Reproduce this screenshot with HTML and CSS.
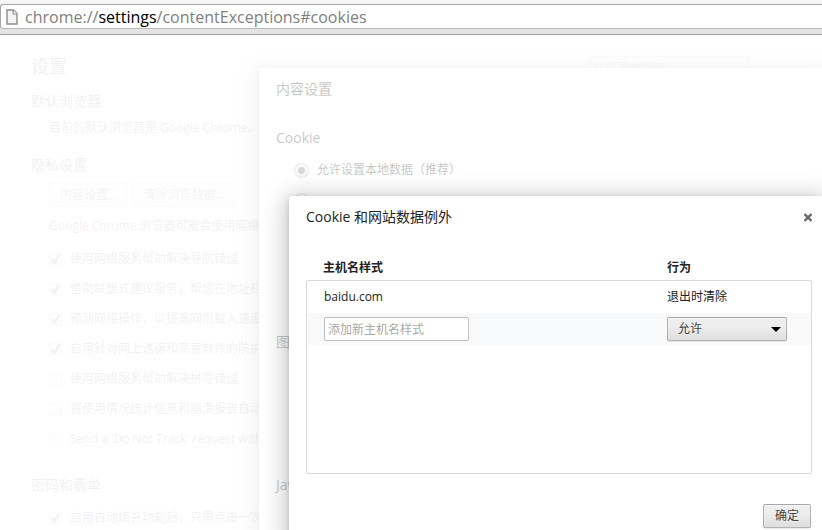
FILE: index.html
```html
<!DOCTYPE html>
<html lang="zh-CN">

<head>
    <meta charset="UTF-8">
    <meta name="viewport" content="width=device-width, initial-scale=1.0">
    <title>设置 - Cookie 和网站数据例外</title>
    <link rel="stylesheet" href="styles.css">
</head>

<body>
    <header class="toolbar">
        <div class="address">
            <svg class="page-icon" width="12" height="16" viewBox="0 0 12 16">
                <path d="M1 1h6.500L11 4.500V15H1z" fill="#f4f4f4" stroke="#8c8c8c" stroke-width="1.400"/>
                <path d="M7.200 1v4H11" fill="#fff" stroke="#8c8c8c" stroke-width="1.200"/>
            </svg>
            <span class="url">chrome://<b>settings</b>/contentExceptions#cookies</span>
        </div>
    </header>

    <main class="stage">
        <div class="settings">
            <div class="settings-head">
                <h1>设置</h1>
                <input class="search" type="search" placeholder="在设置中搜索" aria-label="在设置中搜索">
            </div>

            <section>
                <h2>默认浏览器</h2>
                <div class="section-body">
                    <p>目前的默认浏览器是 Google Chrome。</p>
                </div>
            </section>

            <section class="privacy">
                <h2>隐私设置</h2>
                <div class="section-body">
                    <div class="buttons">
                        <button type="button">内容设置...</button>
                        <button type="button">清除浏览数据...</button>
                    </div>
                    <p class="note">Google Chrome 浏览器可能会使用网络服务</p>
                    <label class="option"><input type="checkbox" checked>使用网络服务帮助解决导航错误</label>
                    <label class="option"><input type="checkbox" checked>借助联想式建议服务，帮您在地址栏</label>
                    <label class="option"><input type="checkbox" checked>预测网络操作，以提高网页载入速度</label>
                    <label class="option"><input type="checkbox" checked>启用针对网上诱骗和恶意软件的防护</label>
                    <label class="option"><input type="checkbox">使用网络服务帮助解决拼写错误</label>
                    <label class="option"><input type="checkbox">将使用情况统计信息和崩溃报告自动</label>
                    <label class="option"><input type="checkbox">Send a 'Do Not Track' request with your</label>
                </div>
            </section>

            <section>
                <h2>密码和表单</h2>
                <div class="section-body">
                    <label class="option"><input type="checkbox" checked>启用自动填充功能后，只需点击一次</label>
                </div>
            </section>
        </div>

        <!-- 内容设置 -->
        <div class="overlay">
            <div class="dialog dialog-content">
                <h1>内容设置</h1>
                <section class="group group-cookie">
                    <h3>Cookie</h3>
                    <label class="option"><input type="radio" name="cookie" checked>允许设置本地数据（推荐）</label>
                    <label class="option"><input type="radio" name="cookie" aria-label="Cookie"></label>
                </section>
                <section class="group group-images">
                    <h3>图片</h3>
                </section>
                <section class="group">
                    <h3>JavaScript</h3>
                </section>
            </div>
        </div>

        <!-- Cookie 例外 -->
        <div class="overlay">
            <div class="dialog dialog-exceptions">
                <div class="dialog-head">
                    <h1>Cookie 和网站数据例外</h1>
                    <button class="close" type="button" aria-label="关闭">
                        <svg width="8" height="10" viewBox="1 0 8 10">
                            <path d="M1.500 2l7 7M8.500 2l-7 7" stroke="#6a6a6a" stroke-width="2.400"/>
                        </svg>
                    </button>
                </div>
                <table class="exceptions">
                    <thead>
                        <tr>
                            <th>主机名样式</th>
                            <th>行为</th>
                        </tr>
                    </thead>
                    <tbody>
                        <tr>
                            <td>baidu.com</td>
                            <td>退出时清除</td>
                        </tr>
                        <tr class="new-row">
                            <td><input class="host" type="text" placeholder="添加新主机名样式" aria-label="主机名样式"></td>
                            <td>
                                <div class="select">
                                    <select aria-label="行为">
                                        <option>允许</option>
                                    </select>
                                </div>
                            </td>
                        </tr>
                    </tbody>
                </table>
                <div class="dialog-foot">
                    <button type="button">确定</button>
                </div>
            </div>
        </div>
    </main>
</body>

</html>
```
FILE: styles.css
```css
* {
    box-sizing: border-box;
}

body {
    margin: 0;
    height: 100vh;
    display: flex;
    flex-direction: column;
    overflow: hidden;
    background: #fff;
    color: #222;
    font: 12px/18px "Open Sans", "Noto Sans CJK SC", sans-serif;
}

h1, h2, h3, p {
    margin: 0;
    font-weight: normal;
}

h1, h2, h3 {
    font-size: 14px;
    line-height: 20px;
}

/* address bar */
.toolbar {
    padding: 4px 0 5px;
    background: linear-gradient(#f6f6f6, #e2e2e2);
    border-bottom: 1px solid #a5a5a5;
}

.address {
    display: flex;
    align-items: center;
    gap: 7px;
    height: 25px;
    padding-left: 5px;
    background: #fff;
    border: 1px solid #a8a8a8;
    border-width: 1px 0 1px 1px;
    border-bottom-color: #b8b8b8;
    border-radius: 3px 0 0 3px;
}

.url {
    color: #808080;
    font-size: 16px;
    line-height: 22px;
}

.url b {
    color: #000;
    font-weight: normal;
}

.stage {
    position: relative;
    flex: 1;
    overflow: hidden;
}

/* controls */
button,
select {
    height: 24px;
    padding: 0 10px;
    border: 1px solid rgba(0, 0, 0, 0.25);
    border-radius: 2px;
    background: linear-gradient(#ededed 38%, #dedede);
    box-shadow: 0 1px 0 rgba(0, 0, 0, 0.08), inset 0 1px 2px rgba(255, 255, 255, 0.75);
    color: #444;
    font: inherit;
    text-shadow: 0 1px 0 #f0f0f0;
}

input {
    margin: 0;
    font: inherit;
}

input[type="text"],
input[type="search"] {
    height: 24px;
    padding: 0 3px;
    border: 1px solid #bfbfbf;
    border-radius: 2px;
    background: #fff;
    appearance: none;
}

input::placeholder {
    color: #a9a9a9;
}

input[type="checkbox"],
input[type="radio"] {
    display: flex;
    flex: none;
    align-items: center;
    justify-content: center;
    width: 13px;
    height: 13px;
    border: 1px solid rgba(0, 0, 0, 0.25);
    border-radius: 2px;
    background: linear-gradient(#ededed 38%, #dedede);
    appearance: none;
}

input[type="radio"] {
    width: 15px;
    height: 15px;
    border-radius: 50%;
}

input[type="checkbox"]:checked::before {
    content: '';
    width: 10px;
    height: 10px;
    background: #444;
    clip-path: polygon(0 55%, 20% 40%, 40% 60%, 75% 0, 100% 10%, 50% 100%, 30% 100%);
}

input[type="radio"]:checked::before {
    content: '';
    width: 7px;
    height: 7px;
    border-radius: 50%;
    background: #666;
}

.option {
    display: flex;
    align-items: center;
    gap: 8px;
    height: 30px;
    white-space: nowrap;
}

/* settings page */
.settings {
    padding: 21px 31px 0;
}

.settings-head {
    display: flex;
    justify-content: space-between;
    height: 32px;
    margin-bottom: 3px;
    border-bottom: 1px solid #eee;
}

.settings-head h1 {
    font-size: 18px;
}

.search {
    width: 160px;
    margin-right: 42px;
    padding: 0 5px;
}

.settings section {
    margin-bottom: 18px;
}

.settings .privacy {
    margin-bottom: 21px;
}

.section-body {
    padding: 8px 0 0 18px;
}

.buttons {
    display: flex;
    gap: 4px;
}

.note {
    padding: 10px 0 9px;
}

/* dialogs */
.overlay {
    position: absolute;
    inset: 0;
    background: rgba(255, 255, 255, 0.75);
}

.dialog {
    position: absolute;
    right: 0;
    background: #fff;
    border-radius: 3px 0 0 0;
    box-shadow: 0 4px 23px 5px rgba(0, 0, 0, 0.2), 0 2px 6px rgba(0, 0, 0, 0.15);
}

.dialog-content {
    top: 33px;
    left: 259px;
    padding: 11px 17px 80px;
}

.group-cookie {
    min-height: 204px;
    margin-top: 29px;
}

.group-images {
    min-height: 143px;
}

.group h3 {
    margin-bottom: 7px;
}

.group .option {
    padding-left: 18px;
}

.dialog-exceptions {
    top: 161px;
    left: 289px;
    padding: 11px 10px 17px 17px;
}

.dialog-head {
    display: flex;
    align-items: center;
    justify-content: space-between;
}

.close {
    display: flex;
    align-items: center;
    justify-content: center;
    width: 8px;
    height: 20px;
    padding: 0;
    border: 0;
    background: none;
    box-shadow: none;
}

/* exceptions list */
.exceptions,
.exceptions thead,
.exceptions tbody {
    display: block;
}

.exceptions {
    margin-top: 29px;
}

.exceptions tr {
    display: grid;
    grid-template-columns: 1fr 144px;
    align-items: center;
    height: 32px;
    padding-left: 17px;
}

.exceptions thead tr {
    height: 24px;
    padding-right: 1px;
}

.exceptions tbody {
    height: 194px;
    border: 1px solid #d9d9d9;
    border-radius: 2px;
}

.exceptions th,
.exceptions td {
    padding: 0;
    text-align: left;
}

.new-row {
    background: #f8f9fb;
}

.host {
    display: block;
    width: 145px;
}

.select {
    position: relative;
    width: 120px;
}

.select select {
    display: block;
    width: 100%;
    appearance: none;
}

.select::after {
    content: '';
    position: absolute;
    top: 10px;
    right: 6px;
    border: 5px solid transparent;
    border-top-color: #000;
    border-bottom: 0;
    pointer-events: none;
}

.dialog-foot {
    display: flex;
    justify-content: flex-end;
    padding: 30px 1px 0 0;
}

.dialog-foot button {
    width: 48px;
}
```
